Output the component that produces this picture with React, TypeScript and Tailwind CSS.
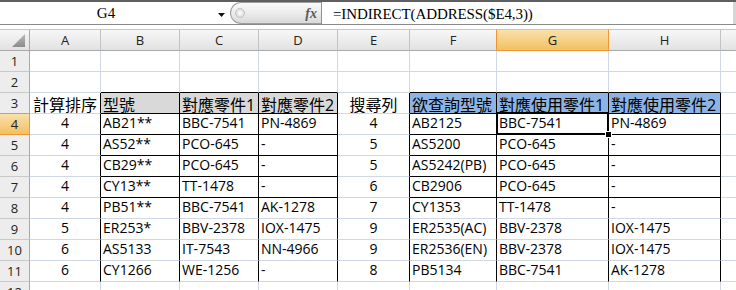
import React from "react";

const data: string[][] = [
  ["", "", "", "", "", "", "", ""],
  ["", "", "", "", "", "", "", ""],
  ["計算排序", "型號", "對應零件1", "對應零件2", "搜尋列", "欲查詢型號", "對應使用零件1", "對應使用零件2"],
  ["4", "AB21**", "BBC-7541", "PN-4869", "4", "AB2125", "BBC-7541", "PN-4869"],
  ["4", "AS52**", "PCO-645", "-", "5", "AS5200", "PCO-645", "-"],
  ["4", "CB29**", "PCO-645", "-", "5", "AS5242(PB)", "PCO-645", "-"],
  ["4", "CY13**", "TT-1478", "-", "6", "CB2906", "PCO-645", "-"],
  ["4", "PB51**", "BBC-7541", "AK-1278", "7", "CY1353", "TT-1478", "-"],
  ["5", "ER253*", "BBV-2378", "IOX-1475", "9", "ER2535(AC)", "BBV-2378", "IOX-1475"],
  ["6", "AS5133", "IT-7543", "NN-4966", "9", "ER2536(EN)", "BBV-2378", "IOX-1475"],
  ["6", "CY1266", "WE-1256", "-", "8", "PB5134", "BBC-7541", "AK-1278"],
  ["", "", "", "", "", "", "", ""],
];

const letters = ["A", "B", "C", "D", "E", "F", "G", "H"];

function FormulaBar() {
  return (
    <div className="flex h-[22px] bg-white">
      <div className="w-[212px] h-full flex justify-center font-['Liberation_Serif',serif] text-[15px] leading-[22px] text-black">
        <span>G4</span>
      </div>
      <div className="w-[18px] h-full flex justify-center pt-[11px]">
        <svg width="7" height="4" viewBox="0 0 7 4">
          <polygon points="0,0 7,0 3.5,4" fill="#111" />
        </svg>
      </div>
      <div className="relative w-[91px] h-[22px] rounded-l-[11px] border border-r-0 border-[#9f9f9f] bg-linear-to-b from-[#fbfbfb] via-[#ececec] to-[#d9d9d9]">
        <div className="absolute left-[4px] top-[5px] w-[10px] h-[10px] rounded-full border border-[#c4c4c4] bg-radial from-[#ffffff] to-[#cfcfcf]" />
        <span className="absolute right-[4px] top-[1px] italic font-bold font-['Liberation_Serif',serif] text-[14px] leading-[20px] text-[#5a5a5a]">
          fx
        </span>
      </div>
      <div className="w-px h-[22px] bg-[#8f8f8f]" />
      <div className="w-[411px] h-full pl-[11px] pt-[2px] font-['Liberation_Serif',serif] text-[15px] tracking-[-0.1px] leading-[20px] text-black whitespace-nowrap overflow-hidden">
        =INDIRECT(ADDRESS($E4,3))
      </div>
      <div className="w-[3px] h-full bg-[#d6d6d6]" />
    </div>
  );
}

function ColHeader({ i }: { i: number }) {
  const sel = i === 6;
  const rightOrange = i === 5 || i === 6;
  return (
    <div
      className={
        "h-[22px] border-t border-r border-b flex justify-center pt-[1px] text-[13px] leading-[19px] text-[#222] border-t-[#c6c6c6] " +
        (rightOrange ? "border-r-[#f29536] " : "border-r-[#c2c2c2] ") +
        (sel
          ? "border-b-[#f29536] bg-linear-to-b from-[#fae0ab] to-[#f1c15f]"
          : "border-b-[#a9a9a9] bg-linear-to-b from-[#f7f7f7] to-[#e2e2e2]")
      }
    >
      {letters[i]}
    </div>
  );
}

function RowHeader({ r }: { r: number }) {
  const n = r + 1;
  const sel = n === 4;
  return (
    <div
      className={
        "h-[21px] border-r border-b flex justify-center pt-[1px] text-[13px] leading-[19px] text-[#222] " +
        (sel
          ? "border-r-[#f29536] border-b-[#f29536] bg-linear-to-b from-[#fae0ab] to-[#f1c15f]"
          : n === 3
          ? "border-r-[#a9a9a9] border-b-[#f29536] bg-[#ededed]"
          : "border-r-[#a9a9a9] border-b-[#c9c9c9] bg-[#ededed]")
      }
    >
      {n}
    </div>
  );
}

function Cell({ r, c, v }: { r: number; c: number; v: string }) {
  const n = r + 1;
  const tableCol = c !== 0 && c !== 4;
  const rightBlack = n >= 3 && n <= 11;
  const bottomBlack = tableCol && n >= 2 && n <= 7;
  const center = c === 0 || c === 4;
  const head = n === 3;
  let bg = "bg-white";
  if (head && c >= 1 && c <= 3) bg = "bg-[#d9d9d9]";
  if (head && c >= 5) bg = "bg-[#8db4e2]";
  return (
    <div
      className={
        "h-[21px] border-r border-b overflow-hidden whitespace-nowrap text-black " +
        bg +
        " " +
        (rightBlack ? "border-r-black " : "border-r-[#d0d7e5] ") +
        (bottomBlack ? "border-b-black " : "border-b-[#d0d7e5] ") +
        (center ? "text-center " : "text-left pl-[2px] ") +
        (head ? "text-[16px] leading-[16px] pt-[4px]" : "text-[14px] leading-[18px]")
      }
    >
      {v}
    </div>
  );
}

function Sheet() {
  return (
    <div className="relative">
      <div className="grid grid-cols-[30px_71px_79px_79px_79px_72px_87px_112px_112px_15px]">
        <div className="relative h-[22px] border-t border-r border-b border-t-[#c6c6c6] border-r-[#a9a9a9] border-b-[#a9a9a9] bg-linear-to-b from-[#f7f7f7] to-[#e2e2e2]">
          <svg className="absolute left-0 top-0" width="29" height="20" viewBox="0 0 29 20">
            <defs>
              <linearGradient id="tri" x1="0" y1="0" x2="0" y2="1">
                <stop offset="0" stopColor="#b9b9b9" />
                <stop offset="1" stopColor="#8c8c8c" />
              </linearGradient>
            </defs>
            <polygon points="25,4 25,17 12,17" fill="url(#tri)" />
          </svg>
        </div>
        {letters.map((_, i) => (
          <ColHeader key={i} i={i} />
        ))}
        <div className="h-[22px] border-t border-b border-t-[#c6c6c6] border-b-[#a9a9a9] bg-linear-to-b from-[#f7f7f7] to-[#e2e2e2]" />
        {data.map((row, r) => (
          <React.Fragment key={r}>
            <RowHeader r={r} />
            {row.map((v, c) => (
              <Cell key={c} r={r} c={c} v={v} />
            ))}
            <div className="h-[21px] border-b border-b-[#d0d7e5] bg-white" />
          </React.Fragment>
        ))}
      </div>
      <div className="absolute left-[496px] top-[83px] w-[113px] h-[23px] border-2 border-black pointer-events-none" />
      <div className="absolute left-[605px] top-[102px] w-[7px] h-[7px] bg-white p-px pointer-events-none">
        <div className="w-full h-full bg-black" />
      </div>
    </div>
  );
}

export default function App() {
  return (
    <div className="w-[736px] h-[290px] overflow-hidden bg-white font-['Open_Sans','Noto_Sans_CJK_TC',sans-serif]">
      <div className="h-[2px] bg-[#5f5f5f]" />
      <FormulaBar />
      <div className="h-px bg-[#8a8a8a]" />
      <div className="h-[4px] bg-white" />
      <Sheet />
    </div>
  );
}
